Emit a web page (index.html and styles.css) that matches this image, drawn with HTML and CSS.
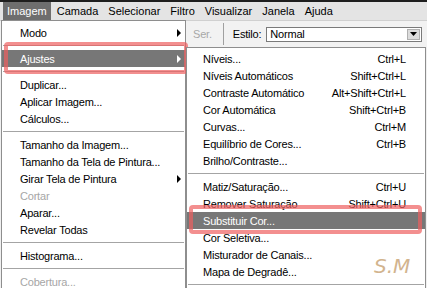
FILE: index.html
```html
<!DOCTYPE html>
<html lang="pt">
<head>
    <meta charset="UTF-8">
    <title>Imagem - Ajustes</title>
    <link rel="stylesheet" href="styles.css">
</head>
<body>
<div class="screen">
    <nav class="menubar">
        <span class="mb-item active">Imagem</span>
        <span class="mb-item">Camada</span>
        <span class="mb-item">Selecionar</span>
        <span class="mb-item">Filtro</span>
        <span class="mb-item">Visualizar</span>
        <span class="mb-item">Janela</span>
        <span class="mb-item">Ajuda</span>
    </nav>

    <div class="options">
        <span class="opt-disabled">Ser.</span>
        <span class="opt-sep"></span>
        <span class="opt-label">Estilo:</span>
        <div class="select">
            <span class="select-value">Normal</span>
            <span class="select-btn">
                <svg width="7" height="4" viewBox="0 0 7 4"><path d="M0 0h7L3.5 4z" fill="#000"/></svg>
            </span>
        </div>
    </div>

    <!-- menu Imagem -->
    <div class="menu menu-main">
        <div class="item sub">Modo</div>
        <div class="sep"></div>
        <div class="item sub hot marked-a">Ajustes</div>
        <div class="sep"></div>
        <div class="item">Duplicar...</div>
        <div class="item">Aplicar Imagem...</div>
        <div class="item">Cálculos...</div>
        <div class="sep"></div>
        <div class="item">Tamanho da Imagem...</div>
        <div class="item">Tamanho da Tela de Pintura...</div>
        <div class="item sub">Girar Tela de Pintura</div>
        <div class="item off">Cortar</div>
        <div class="item">Aparar...</div>
        <div class="item">Revelar Todas</div>
        <div class="sep"></div>
        <div class="item">Histograma...</div>
        <div class="sep"></div>
        <div class="item off">Cobertura...</div>
    </div>

    <!-- submenu Ajustes -->
    <div class="menu menu-sub">
        <div class="item"><span>Níveis...</span><span class="key">Ctrl+L</span></div>
        <div class="item"><span>Níveis Automáticos</span><span class="key">Shift+Ctrl+L</span></div>
        <div class="item"><span>Contraste Automático</span><span class="key">Alt+Shift+Ctrl+L</span></div>
        <div class="item"><span>Cor Automática</span><span class="key">Shift+Ctrl+B</span></div>
        <div class="item"><span>Curvas...</span><span class="key">Ctrl+M</span></div>
        <div class="item"><span>Equilíbrio de Cores...</span><span class="key">Ctrl+B</span></div>
        <div class="item"><span>Brilho/Contraste...</span></div>
        <div class="sep"></div>
        <div class="item"><span>Matiz/Saturação...</span><span class="key">Ctrl+U</span></div>
        <div class="item"><span>Remover Saturação</span><span class="key">Shift+Ctrl+U</span></div>
        <div class="item hot marked-b"><span>Substituir Cor...</span></div>
        <div class="item"><span>Cor Seletiva...</span></div>
        <div class="item"><span>Misturador de Canais...</span></div>
        <div class="item"><span>Mapa de Degradê...</span></div>
        <div class="sep"></div>
    </div>

    <div class="mark">S.M</div>
</div>
</body>
</html>
```

FILE: styles.css
```css
html, body {
    margin: 0;
    padding: 0;
}

body {
    font-family: "Liberation Sans", Arial, sans-serif;
    font-size: 11px;
    letter-spacing: -0.2px;
    color: #000;
    background: #f0f0f0;
}

.screen {
    position: relative;
    width: 427px;
    height: 288px;
    overflow: hidden;
    background: #f0f0f0;
}

/* barra de menus */
.menubar {
    display: flex;
    gap: 2px;
    height: 18px;
    padding-left: 3px;
    border-top: 2px solid #1e1e1e;
    background: #e4e4e4;
    letter-spacing: 0;
}

.mb-item {
    display: flex;
    align-items: center;
    padding: 0 4px;
}

.mb-item.active {
    background: #6e6e6e;
    color: #fff;
}

/* barra de opcoes por tras do menu */
.options {
    display: flex;
    align-items: center;
    height: 26px;
    padding-left: 193px;
    border-top: 1px solid #d0d0d0;
    background: #f2f2f2;
}

.opt-disabled {
    color: #a8a8a8;
}

.opt-sep {
    width: 1px;
    height: 22px;
    margin: 0 9px 0 11px;
    background: #a0a0a0;
}

.opt-label {
    margin-right: 5px;
}

.select {
    display: flex;
    align-items: center;
    justify-content: space-between;
    width: 151px;
    height: 13px;
    padding-left: 3px;
    border: 1px solid #7a7a7a;
    background: #fff;
}

.select-btn {
    display: flex;
    align-items: center;
    justify-content: center;
    width: 13px;
    height: 11px;
    margin-right: 1px;
    background: #dcdcdc;
    border: 1px solid #b0b0b0;
    box-sizing: border-box;
}

/* menus */
.menu {
    position: absolute;
    background: #fff;
    border: 1px solid #8e8e8e;
}

.menu-main {
    top: 20px;
    left: 1px;
    width: 183px;
    padding: 3px 0;
}

.menu-sub {
    top: 47px;
    left: 186px;
    width: 238px;
    padding: 2px 0;
}

.item {
    position: relative;
    display: flex;
    align-items: center;
    justify-content: space-between;
    height: 17px;
    padding-left: 18px;
    padding-right: 19px;
}

.menu-sub .item {
    padding-left: 16px;
}

.item.sub::after {
    content: "";
    position: absolute;
    right: 4px;
    top: 5px;
    border-left: 4px solid #000;
    border-top: 4px solid transparent;
    border-bottom: 4px solid transparent;
}

.item.off {
    color: #a6a6a6;
}

.item.hot {
    background: #777;
    color: #fff;
}

.item.hot.sub::after {
    border-left-color: #fff;
}

.sep {
    height: 1px;
    margin: 4px 1px;
    background: #a4a4a4;
}

/* marcacoes vermelhas */
.marked-a::before,
.marked-b::before {
    content: "";
    position: absolute;
    border: 4px solid rgba(238, 96, 96, 0.7);
    border-radius: 4px;
    pointer-events: none;
}

.marked-a::before {
    top: -8px;
    bottom: -7px;
    left: 2px;
    right: -3px;
}

.marked-b::before {
    top: -7px;
    bottom: -5px;
    left: 2px;
    right: 3px;
}

.mark {
    position: absolute;
    left: 374px;
    top: 254px;
    font-family: "DejaVu Sans", sans-serif;
    font-style: italic;
    font-size: 20px;
    letter-spacing: 0;
    color: #d2b48e;
}
```
